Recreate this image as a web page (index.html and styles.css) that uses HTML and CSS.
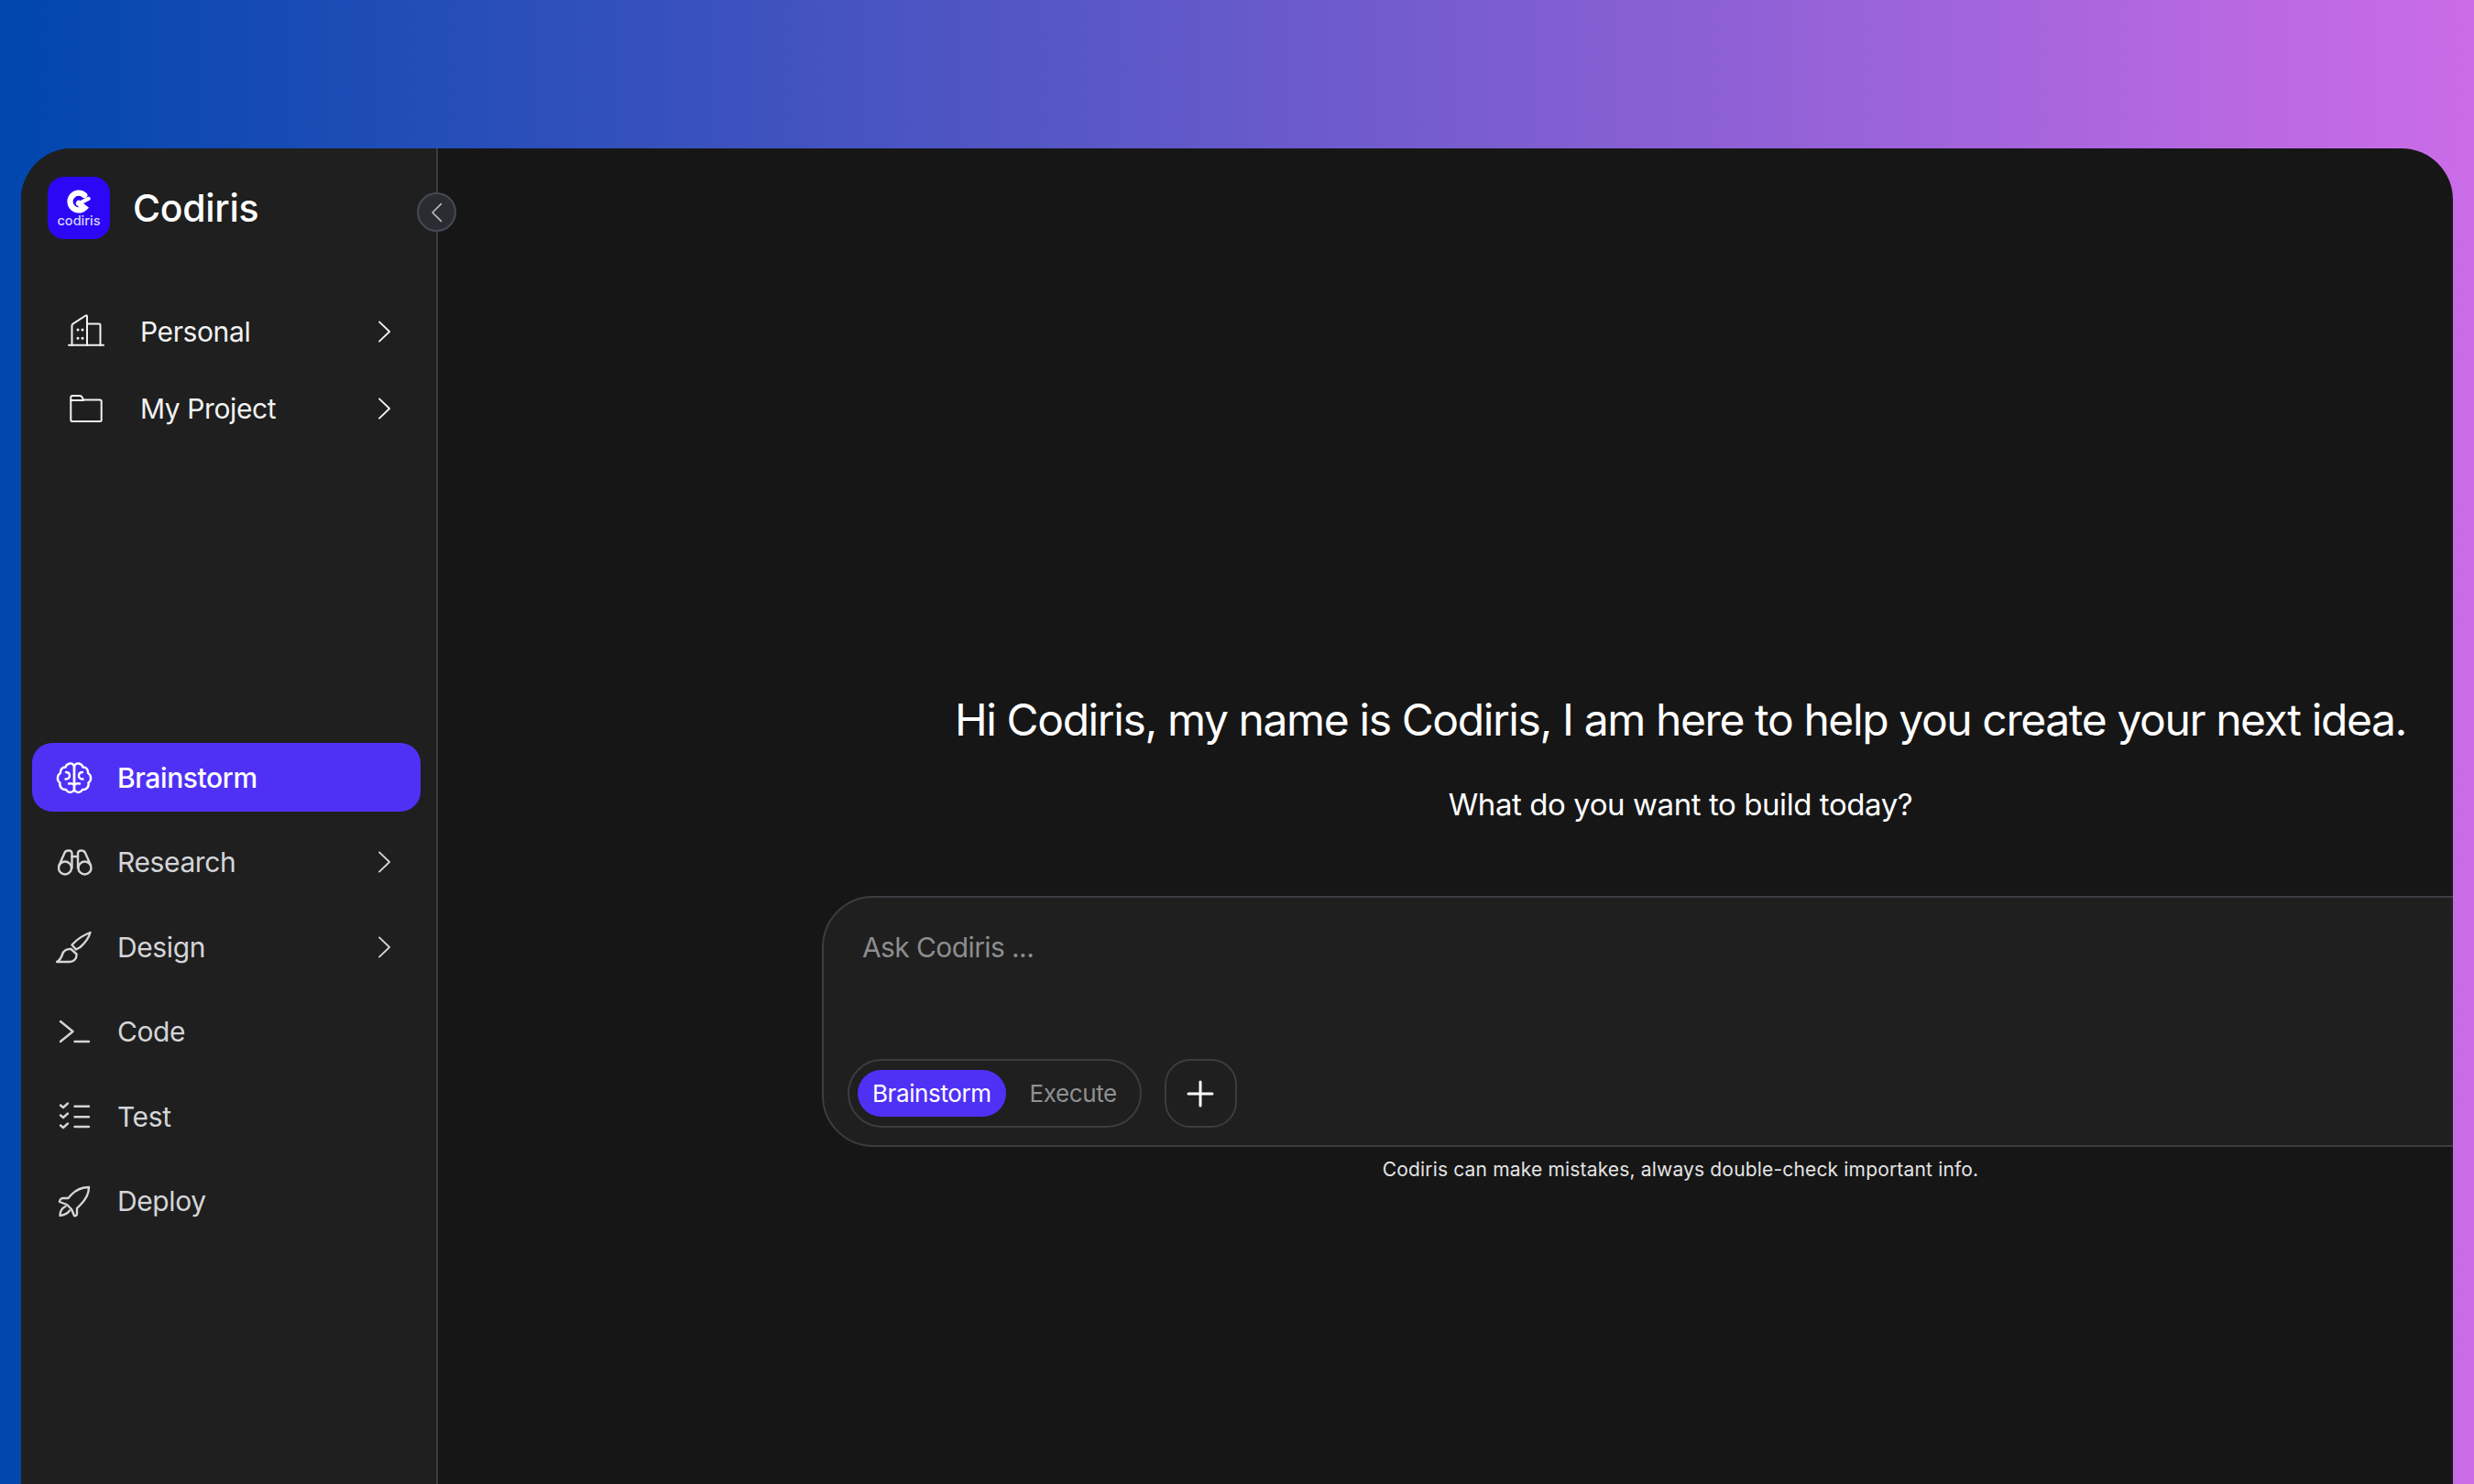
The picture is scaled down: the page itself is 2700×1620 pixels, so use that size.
FILE: index.html
```html
<!DOCTYPE html>
<html lang="en">
  <head>
    <meta charset="utf-8" />
    <title>Codiris</title>
    <link rel="stylesheet" href="styles.css">
  </head>
  <body>
    <div class="window">
      <aside class="sidebar">
        <div class="brand">
          <div class="logo">
            <svg class="logo-mark" viewBox="0 0 24 24" fill="none" stroke="#fff" stroke-width="5" stroke-linecap="round">
              <path d="M17 6.500A7.500 7.500 0 1 0 17 17.500L12 13.500"/>
              <path d="M14.500 12.500L20.500 9.500" stroke-width="3.400"/>
            </svg>
            <span class="logo-text">codiris</span>
          </div>
          <span class="brand-name">Codiris</span>
        </div>
        <button class="collapse">
          <svg viewBox="0 0 24 24" fill="none" stroke="#b6bac2" stroke-width="1.300" stroke-linecap="round" stroke-linejoin="round"><path d="M15.500 4.500L8 12L15.500 19.500"/></svg>
        </button>

        <ul class="nav nav-top">
          <li class="nav-item">
            <svg class="nav-icon" viewBox="0 0 40 40" fill="none" stroke="currentColor" stroke-width="2" stroke-linecap="round" stroke-linejoin="round">
              <path d="M1 34.700H39"/>
              <path d="M4.500 34.700V13.500C4.500 12.500 5 11.800 5.800 11.300L19.500 2.500C20.200 2 21 2.500 21 3.500V34.700"/>
              <path d="M21 11.500H34C35 11.500 35.500 12 35.500 13V34.700"/>
              <path d="M11 18h.01M16 18h.01M11 27.300h.01M16 27.300h.01" stroke-width="3"/>
            </svg>
            <span class="nav-label">Personal</span>
            <svg class="chevron" viewBox="0 0 16 26" fill="none" stroke="currentColor" stroke-width="2" stroke-linecap="round" stroke-linejoin="round"><path d="M2 1.500L14 13L2 24.500"/></svg>
          </li>
          <li class="nav-item">
            <svg class="nav-icon" viewBox="0 0 40 40" fill="none" stroke="currentColor" stroke-width="2" stroke-linecap="round" stroke-linejoin="round">
              <path d="M5 6H13C14 6 15 6.500 15.500 7.500L17 10.500H35C36 10.500 36.700 11.200 36.700 12V32.500C36.700 33.500 36 34 35 34H5C4 34 3.300 33.500 3.300 32.500V7.500C3.300 6.500 4 6 5 6Z"/>
              <path d="M3.300 11H17"/>
            </svg>
            <span class="nav-label">My Project</span>
            <svg class="chevron" viewBox="0 0 16 26" fill="none" stroke="currentColor" stroke-width="2" stroke-linecap="round" stroke-linejoin="round"><path d="M2 1.500L14 13L2 24.500"/></svg>
          </li>
        </ul>

        <ul class="nav nav-bottom">
          <li class="tool active">
            <svg class="nav-icon" viewBox="0 0 40 40" fill="none" stroke="currentColor" stroke-width="2.400" stroke-linecap="round" stroke-linejoin="round">
              <path d="M20 9C20 5.500 17.500 4 15 4.500C12.500 5 11 6.500 10.500 8.500C6.500 8.500 4.500 11.500 5 15C1.500 16.500 .5 23 4.500 25.500C3.500 30 7 33.500 11 33C12.500 36 17 37.500 20 33.500Z"/>
              <path d="M20 9C20 5.500 22.500 4 25 4.500C27.500 5 29 6.500 29.500 8.500C33.500 8.500 35.500 11.500 35 15C38.500 16.500 39.500 23 35.500 25.500C36.500 30 33 33.500 29 33C27.500 36 23 37.500 20 33.500Z"/>
              <path d="M11 14C13.500 14 15 15.500 15 18C15 20 13 21.500 10.500 21.500M29 14C26.500 14 25 15.500 25 18C25 20 27 21.500 29.500 21.500M20 28C18.500 26.500 16.500 26 14 26.500M20 28C21.500 26.500 23.500 26 26 26.500"/>
            </svg>
            <span class="nav-label">Brainstorm</span>
          </li>
          <li class="tool">
            <svg class="nav-icon" viewBox="0 0 40 40" fill="none" stroke="currentColor" stroke-width="2.400" stroke-linecap="round" stroke-linejoin="round">
              <circle cx="10" cy="26.500" r="7"/>
              <circle cx="31.500" cy="26.500" r="7"/>
              <path d="M3.300 24L9.500 10C11 6.500 17.500 6.500 17.500 10.500V26.500"/>
              <path d="M38.200 24L32 10C30.500 6.500 24 6.500 24 10.500V26.500"/>
              <path d="M17.500 14H24"/>
            </svg>
            <span class="nav-label">Research</span>
            <svg class="chevron" viewBox="0 0 16 26" fill="none" stroke="currentColor" stroke-width="2" stroke-linecap="round" stroke-linejoin="round"><path d="M2 1.500L14 13L2 24.500"/></svg>
          </li>
          <li class="tool">
            <svg class="nav-icon" viewBox="0 0 40 40" fill="none" stroke="currentColor" stroke-width="2.400" stroke-linecap="round" stroke-linejoin="round">
              <path d="M1 36C5 34 6 31 7 28C8 24 12 21.500 16.500 22L22.500 27.500C23 32 20 36 14 36Z"/>
              <path d="M17.500 17.500L22 22.500L26.500 20C31 16 35.500 11 37.500 4C31 6.500 24 11 20 15Z"/>
            </svg>
            <span class="nav-label">Design</span>
            <svg class="chevron" viewBox="0 0 16 26" fill="none" stroke="currentColor" stroke-width="2" stroke-linecap="round" stroke-linejoin="round"><path d="M2 1.500L14 13L2 24.500"/></svg>
          </li>
          <li class="tool">
            <svg class="nav-icon" viewBox="0 0 40 40" fill="none" stroke="currentColor" stroke-width="2.400" stroke-linecap="round" stroke-linejoin="round">
              <path d="M5 9L18.500 20L5 31"/>
              <path d="M20.500 31H36"/>
            </svg>
            <span class="nav-label">Code</span>
          </li>
          <li class="tool">
            <svg class="nav-icon" viewBox="0 0 40 40" fill="none" stroke="currentColor" stroke-width="2.400" stroke-linecap="round" stroke-linejoin="round">
              <path d="M5 7.500L8 10L13 5.500M5 18.500L8 21L13 16.500M5 29.500L8 32L13 27.500"/>
              <path d="M20.500 8.700H36M20.500 20.300H36M20.500 31H36"/>
            </svg>
            <span class="nav-label">Test</span>
          </li>
          <li class="tool">
            <svg class="nav-icon" viewBox="0 0 40 40" fill="none" stroke="currentColor" stroke-width="2.400" stroke-linecap="round" stroke-linejoin="round">
              <path d="M36 5C28 5 22 8 17 13L13.500 17H7.500C6 17 5 18 4.500 19L4 21L12 24L17 29L20 36C21.500 36.500 23 36 23 34V28L27 24C32 19 36 13 36 5Z"/>
              <path d="M10.500 26C6 28 4.500 32 4.500 36C8.500 35.500 12.500 34 15 30.500"/>
            </svg>
            <span class="nav-label">Deploy</span>
          </li>
        </ul>
      </aside>

      <main class="main">
        <div class="chat">
          <h1 class="greeting">Hi Codiris, my name is Codiris, I am here to help you create your next idea.</h1>
          <p class="question">What do you want to build today?</p>
          <div class="prompt">
            <div class="placeholder">Ask Codiris ...</div>
            <div class="prompt-actions">
              <div class="mode-switch">
                <span class="mode selected">Brainstorm</span>
                <span class="mode">Execute</span>
              </div>
              <button class="add">
                <svg viewBox="0 0 30 30" fill="none" stroke="#fff" stroke-width="3" stroke-linecap="round"><path d="M15 2V28M2 15H28"/></svg>
              </button>
            </div>
          </div>
          <p class="disclaimer">Codiris can make mistakes, always double-check important info.</p>
        </div>
      </main>
    </div>
  </body>
</html>
```

FILE: styles.css
```css
body, html {
  height: 100%;
  margin: 0;
  padding: 0;
  overflow: hidden;
}
body {
  background: linear-gradient(90deg, #0047ad 0%, #cb6ce7 100%);
  font-family: "Inter", "Roboto", sans-serif;
  padding: 162px 23px 0;
  box-sizing: border-box;
}
ul {
  list-style: none;
  margin: 0;
  padding: 0;
}
svg {
  display: block;
}
button {
  padding: 0;
  cursor: pointer;
}

.window {
  display: flex;
  height: 1458px;
  background-color: #161616;
  border-radius: 56px 56px 0 0;
  overflow: hidden;
  position: relative;
}

/* sidebar */
.sidebar {
  width: 455px;
  flex: none;
  box-sizing: border-box;
  background-color: #1f1f1f;
  border-right: 2px solid #3c3c42;
  padding-top: 31px;
  display: flex;
  flex-direction: column;
}
.brand {
  display: flex;
  align-items: center;
  gap: 25px;
  padding-left: 29px;
}
.logo {
  width: 68px;
  height: 68px;
  border-radius: 18px;
  background-color: #2b07f5;
  display: flex;
  flex-direction: column;
  align-items: center;
  padding-top: 12px;
  box-sizing: border-box;
}
.logo-mark {
  width: 30px;
  height: 30px;
}
.logo-text {
  color: #d9d4ff;
  font-size: 14.500px;
  font-weight: 500;
  line-height: 16px;
  margin-top: -2px;
}
.brand-name {
  color: #fff;
  font-size: 41px;
  font-weight: 500;
  letter-spacing: -0.300px;
}
.collapse {
  position: absolute;
  left: 432px;
  top: 48px;
  width: 43px;
  height: 43px;
  border-radius: 50%;
  background-color: #2b2c31;
  border: 2px solid #434a57;
  display: flex;
  align-items: center;
  justify-content: center;
}
.collapse svg {
  width: 30px;
  height: 30px;
}

.nav-top {
  margin-top: 59px;
  color: #f2f2f2;
}
.nav-item {
  height: 84px;
  display: flex;
  align-items: center;
  padding: 0 49px 0 51px;
}
.nav-item .nav-icon {
  margin-right: 39px;
}
.nav-bottom {
  margin-top: 323px;
  padding: 0 17px 0 12px;
  color: #d4d5d8;
}
.tool {
  height: 75px;
  margin-bottom: 17.600px;
  display: flex;
  align-items: center;
  padding: 0 32px 0 26px;
  border-radius: 22px;
}
.tool.active {
  background-color: #4f31f6;
  color: #fff;
}
.tool.active .nav-label {
  font-weight: 500;
}
.tool .nav-icon {
  margin-right: 27px;
}
.nav-icon {
  width: 40px;
  height: 40px;
  flex: none;
}
.nav-label {
  flex: 1;
  font-size: 30px;
  font-weight: 400;
  letter-spacing: -0.400px;
}
.chevron {
  width: 15px;
  height: 24px;
  flex: none;
}

/* main */
.main {
  flex: 1;
  min-width: 0;
  padding: 594px 0 0 419px;
  box-sizing: border-box;
}
.chat {
  width: 1874px;
  text-align: center;
  color: #fff;
}
.greeting {
  margin: 0;
  font-size: 48px;
  font-weight: 400;
  line-height: 60px;
  letter-spacing: -1.400px;
}
.question {
  margin: 40px 0 0;
  font-size: 33px;
  line-height: 44px;
  letter-spacing: -0.430px;
}
.prompt {
  margin-top: 78px;
  height: 274px;
  box-sizing: border-box;
  background-color: #1f1f1f;
  border: 2px solid #3c3c42;
  border-radius: 56px;
  padding: 32px 26px 0;
  text-align: left;
}
.placeholder {
  color: #8d8d8d;
  font-size: 30px;
  line-height: 44px;
  padding-left: 16px;
  letter-spacing: -0.600px;
}
.prompt-actions {
  display: flex;
  gap: 25px;
  margin-top: 100px;
}
.mode-switch {
  height: 75px;
  box-sizing: border-box;
  border: 2px solid #3c3c42;
  border-radius: 38px;
  padding: 0 25px 0 9px;
  display: flex;
  align-items: center;
  gap: 26px;
  font-size: 26px;
  letter-spacing: -0.400px;
  color: #8f8f8f;
}
.mode.selected {
  height: 51px;
  line-height: 51px;
  padding: 0 16px;
  border-radius: 26px;
  background-color: #4f31f6;
  color: #fff;
}
.add {
  width: 79px;
  height: 75px;
  box-sizing: border-box;
  background: none;
  border: 2px solid #3c3c42;
  border-radius: 28px;
  display: flex;
  align-items: center;
  justify-content: center;
}
.add svg {
  width: 30px;
  height: 30px;
}
.disclaimer {
  margin: 11px 0 0;
  font-size: 21px;
  line-height: 28px;
  color: #e4e4e4;
  letter-spacing: 0.170px;
}
```
